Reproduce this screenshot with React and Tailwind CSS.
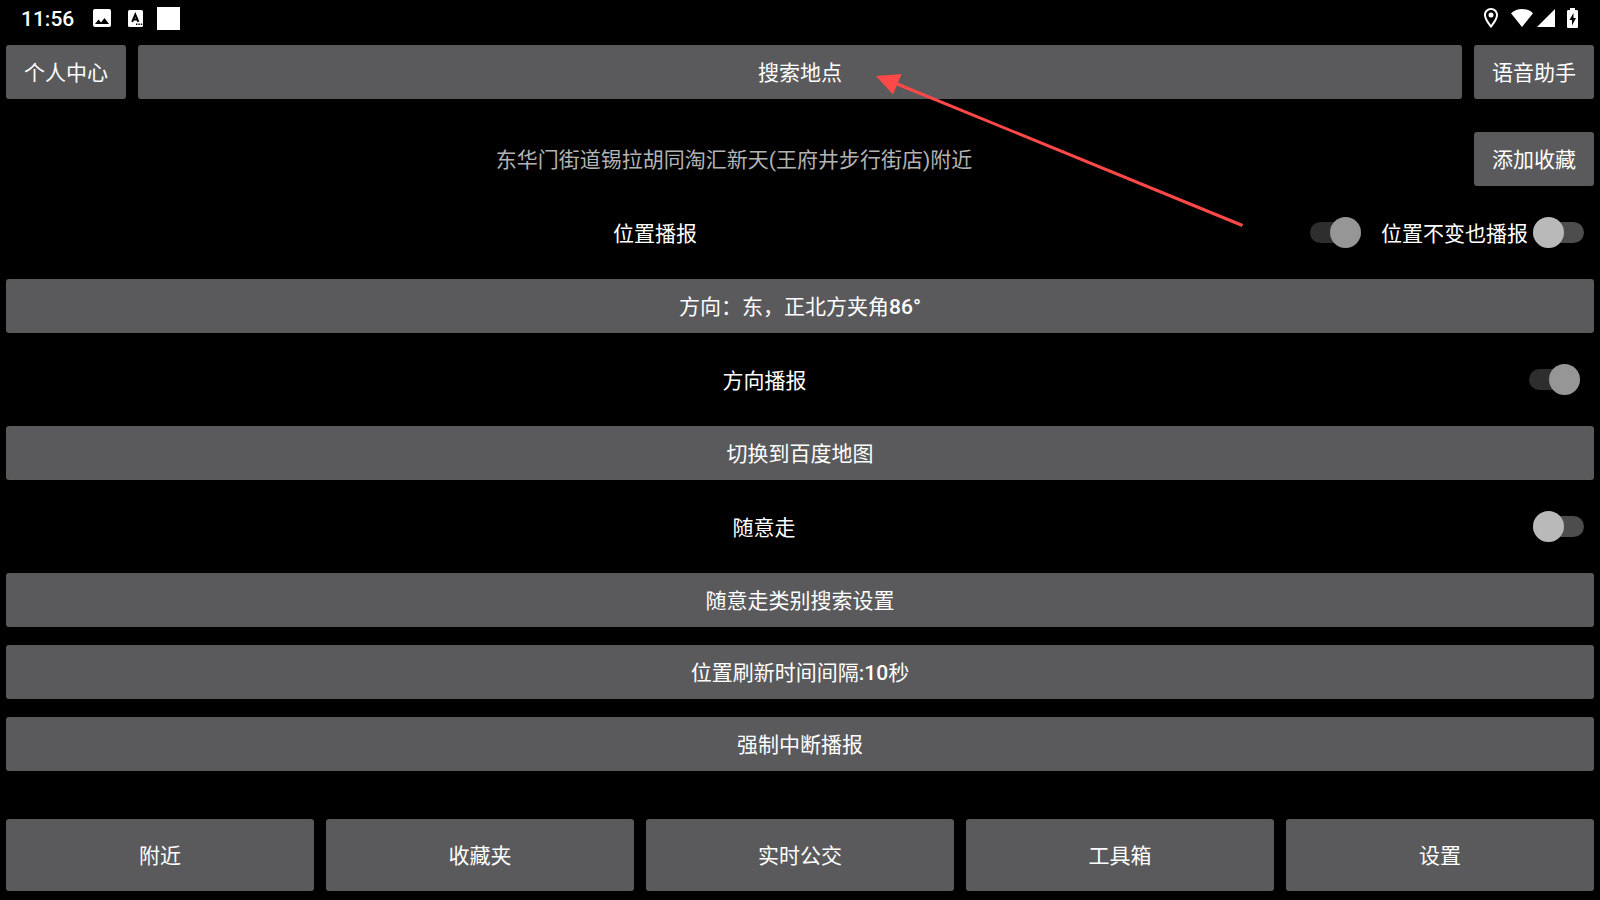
import { useState } from "react";

const TABS = ["附近", "收藏夹", "实时公交", "工具箱", "设置"];

function Button({ children, className = "h-[54px]", onClick }) {
  return (
    <button
      type="button"
      onClick={onClick}
      className={`rounded-[3px] bg-[#5a5a5c] px-4 pt-0.5 text-white whitespace-nowrap active:bg-[#6d6c6e] ${className}`}
    >
      {children}
    </button>
  );
}

function Toggle({ id, checked, onChange, className = "" }) {
  return (
    <input
      id={id}
      type="checkbox"
      role="switch"
      checked={checked}
      onChange={(e) => onChange(e.target.checked)}
      className={`relative flex h-[31px] w-[51px] flex-shrink-0 cursor-pointer appearance-none items-center before:h-[21px] before:w-full before:rounded-full before:bg-[#4d4d4d] before:content-[''] after:absolute after:left-0 after:h-[31px] after:w-[31px] after:rounded-full after:bg-[#b9b9b9] after:content-[''] checked:before:bg-[#2e2e2e] checked:after:left-[20px] checked:after:bg-[#969696] ${className}`}
    />
  );
}

function StatusBar() {
  return (
    <header className="flex h-9 items-center justify-between pl-[21px] pr-[22px]">
      <div className="flex items-center">
        <span className="pt-0.5 font-medium">11:56</span>
        {/* picture */}
        <svg viewBox="0 0 18 18" className="ml-[19px] h-[18px] w-[18px]" fill="#fff">
          <path d="M18 16V2a2 2 0 0 0-2-2H2a2 2 0 0 0-2 2v14a2 2 0 0 0 2 2h14a2 2 0 0 0 2-2zM5.5 10.5 8 13.5l3.5-4.5 4.5 6H2z" />
        </svg>
        {/* input method */}
        <svg viewBox="0 0 15 17" className="ml-[17px] h-[17px] w-[15px]" fill="none">
          <rect width="15" height="17" rx="1.5" fill="#fff" />
          <path d="M4.200 11.800 7.300 4.600 10.400 11.800M5.200 9.500h4.200" stroke="#000" strokeWidth="2" />
          <path d="M8 14.300h1.400M10.400 14.300h1.400M12.800 14.300h1.400" stroke="#000" strokeWidth="1.400" />
        </svg>
        <span className="ml-[14px] h-[23px] w-[23px] bg-white" />
      </div>
      <div className="flex items-center">
        {/* location */}
        <svg viewBox="5 2 14 20" className="h-[20px] w-[14px]" fill="#fff">
          <path d="M12 2C8.130 2 5 5.130 5 9c0 5.250 7 13 7 13s7-7.750 7-13c0-3.870-3.130-7-7-7zM7 9c0-2.760 2.240-5 5-5s5 2.240 5 5c0 2.880-2.880 7.190-5 9.880C9.920 16.210 7 11.850 7 9z" />
          <circle cx="12" cy="9" r="2.500" />
        </svg>
        {/* wifi */}
        <svg viewBox="0 0 22 18" className="ml-[13px] h-[18px] w-[22px]" fill="#fff">
          <path d="M11 18 22 4.300C19 1.500 15 0 11 0S3 1.500 0 4.300z" />
        </svg>
        {/* signal */}
        <svg viewBox="0 0 18 18" className="ml-1 h-[18px] w-[18px]" fill="#fff">
          <path d="M0 18h18V0z" />
        </svg>
        {/* battery */}
        <svg viewBox="0 0 11 20" className="ml-3 h-[20px] w-[11px]" fill="#fff">
          <path d="M9.700 2H8V0H3v2H1.300C.600 2 0 2.600 0 3.300v15.400C0 19.400.600 20 1.300 20h8.400c.700 0 1.300-.600 1.300-1.300V3.300C11 2.600 10.400 2 9.700 2z" />
          <path d="M5 17.500V12H2.500L6.500 5v5H9z" fill="#000" />
        </svg>
      </div>
    </header>
  );
}

export default function App() {
  const [broadcast, setBroadcast] = useState(true);
  const [repeat, setRepeat] = useState(false);
  const [direction, setDirection] = useState(true);
  const [walk, setWalk] = useState(false);

  return (
    <div className="relative flex min-h-screen flex-col overflow-hidden bg-black font-[Roboto,'Noto_Sans_CJK_SC',sans-serif] text-[21px] leading-[30px] text-white">
      <StatusBar />

      <main className="flex flex-col">
        <div className="flex gap-3 px-1.5 py-[9px]">
          <Button className="h-[54px] w-[120px]">个人中心</Button>
          <Button className="h-[54px] flex-1">搜索地点</Button>
          <Button className="h-[54px] w-[120px]">语音助手</Button>
        </div>

        <div className="mt-[15px] flex items-center gap-1.5 py-[9px] pr-1.5">
          <p className="flex-1 pt-0.5 text-center text-[#b3b3b3]">东华门街道锡拉胡同淘汇新天(王府井步行街店)附近</p>
          <Button className="h-[54px] w-[120px]">添加收藏</Button>
        </div>

        <div className="flex h-[75px] items-center pr-4">
          <label htmlFor="broadcast" className="flex-1 pt-0.5 text-center">位置播报</label>
          <Toggle id="broadcast" checked={broadcast} onChange={setBroadcast} />
          <label htmlFor="repeat" className="ml-5 pt-0.5">位置不变也播报</label>
          <Toggle id="repeat" checked={repeat} onChange={setRepeat} className="ml-[5px]" />
        </div>

        <div className="flex flex-col px-1.5 py-[9px]">
          <Button>方向：东，正北方夹角<span className="font-medium">86°</span></Button>
        </div>

        <div className="flex h-[75px] items-center pr-5">
          <label htmlFor="direction" className="flex-1 pt-0.5 text-center">方向播报</label>
          <Toggle id="direction" checked={direction} onChange={setDirection} />
        </div>

        <div className="flex flex-col px-1.5 py-[9px]">
          <Button>切换到百度地图</Button>
        </div>

        <div className="flex h-[75px] items-center pr-4">
          <label htmlFor="walk" className="flex-1 pt-0.5 text-center">随意走</label>
          <Toggle id="walk" checked={walk} onChange={setWalk} className="ml-[5px]" />
        </div>

        <div className="flex flex-col gap-[18px] px-1.5 py-[9px]">
          <Button>随意走类别搜索设置</Button>
          <Button>位置刷新时间间隔<span className="font-medium">:10</span>秒</Button>
          <Button>强制中断播报</Button>
        </div>
      </main>

      <nav className="mt-auto grid grid-cols-5 gap-3 px-1.5 py-[9px]">
        {TABS.map((tab) => (
          <Button key={tab} className="h-[72px]">{tab}</Button>
        ))}
      </nav>

      {/* Arrow pointing at the search button */}
      <svg viewBox="0 0 368 154" className="pointer-events-none absolute left-[876px] top-[74px] h-[154px] w-[368px]">
        <path d="M20 9.500 366.500 151.500" stroke="#ff4848" strokeWidth="3" />
        <path d="M0 2 25.500 0 17 20.500z" fill="#ff4848" />
      </svg>
    </div>
  );
}
